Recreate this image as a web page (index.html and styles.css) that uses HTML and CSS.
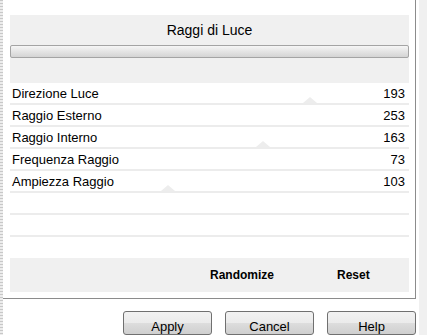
FILE: index.html
```html
<!DOCTYPE html>
<html lang="it">
<head>
    <meta charset="UTF-8">
    <link rel="stylesheet" href="styles.css">
    <title>Raggi di Luce</title>
</head>
<body>
    <div class="edge"></div>
    <div class="wrap">
        <div class="panel">
            <div class="header">
                <div class="title">Raggi di Luce</div>
                <div class="progress"></div>
            </div>

            <div class="row"><span>Direzione Luce</span><span>193</span><i class="thumb" style="left: 293px"></i></div>
            <div class="row"><span>Raggio Esterno</span><span>253</span></div>
            <div class="row"><span>Raggio Interno</span><span>163</span><i class="thumb" style="left: 246px"></i></div>
            <div class="row"><span>Frequenza Raggio</span><span>73</span></div>
            <div class="row"><span>Ampiezza Raggio</span><span>103</span><i class="thumb" style="left: 151px"></i></div>
            <div class="row"></div>
            <div class="row"></div>

            <div class="tools">
                <span class="randomize">Randomize</span>
                <span class="reset">Reset</span>
            </div>
        </div>

        <div class="actions">
            <button>Apply</button>
            <button>Cancel</button>
            <button>Help</button>
        </div>
    </div>
    <div class="side"></div>
</body>
</html>
```

FILE: styles.css
```css
body {
    margin: 0;
    width: 427px;
    height: 335px;
    overflow: hidden;
    display: flex;
    background-color: #ffffff;
    font-family: "Liberation Sans", Arial, sans-serif;
    color: #000000;
}

.edge {
    width: 3px;
    background-image: repeating-linear-gradient(to bottom, #c8c8c8 0, #c8c8c8 1px, #ececec 1px, #ececec 3px);
}

.wrap {
    width: 414px;
    display: flex;
    flex-direction: column;
}

.panel {
    width: 413px;
    height: 302px;
    box-sizing: border-box;
    padding: 15px 6px 0 7px;
    border-right: 1px solid #8c8c8c;
    border-bottom: 1px solid #8c8c8c;
}

.header {
    background-color: #f0f0f0;
    height: 68px;
}

.title {
    height: 30px;
    line-height: 30px;
    text-align: center;
    font-size: 14px;
}

.progress {
    height: 11px;
    border: 1px solid #a4a4a4;
    border-radius: 2px;
    background: linear-gradient(to bottom, #f6f6f6 0%, #e6e6e6 45%, #d4d4d4 100%);
}

.row {
    position: relative;
    height: 20px;
    border-bottom: 2px solid #ececec;
    display: flex;
    justify-content: space-between;
    align-items: center;
    padding: 0 4px 0 2px;
    font-size: 13px;
}

.thumb {
    position: absolute;
    bottom: 0;
    width: 0;
    height: 0;
    border-left: 7px solid transparent;
    border-right: 7px solid transparent;
    border-bottom: 6px solid #ededed;
}

.tools {
    margin-top: 21px;
    height: 34px;
    background-color: #f0f0f0;
    display: flex;
    align-items: center;
    font-size: 12px;
    font-weight: bold;
}

.randomize {
    margin-left: 200px;
}

.reset {
    margin-left: 63px;
}

.actions {
    display: flex;
    justify-content: flex-end;
    gap: 13px;
    padding: 12px 1px 0 0;
}

button {
    width: 89px;
    height: 24px;
    border: 1px solid #707070;
    border-radius: 3px;
    background: linear-gradient(to bottom, #f2f2f2 0%, #ebebeb 50%, #dddddd 51%, #cfcfcf 100%);
    font-family: "Liberation Sans", Arial, sans-serif;
    font-size: 13px;
    padding: 6px 0 0 0;
    color: #000000;
}

.side {
    flex: 1;
    background-color: #f0f0f0;
    border-left: 2px solid #ffffff;
}
```
